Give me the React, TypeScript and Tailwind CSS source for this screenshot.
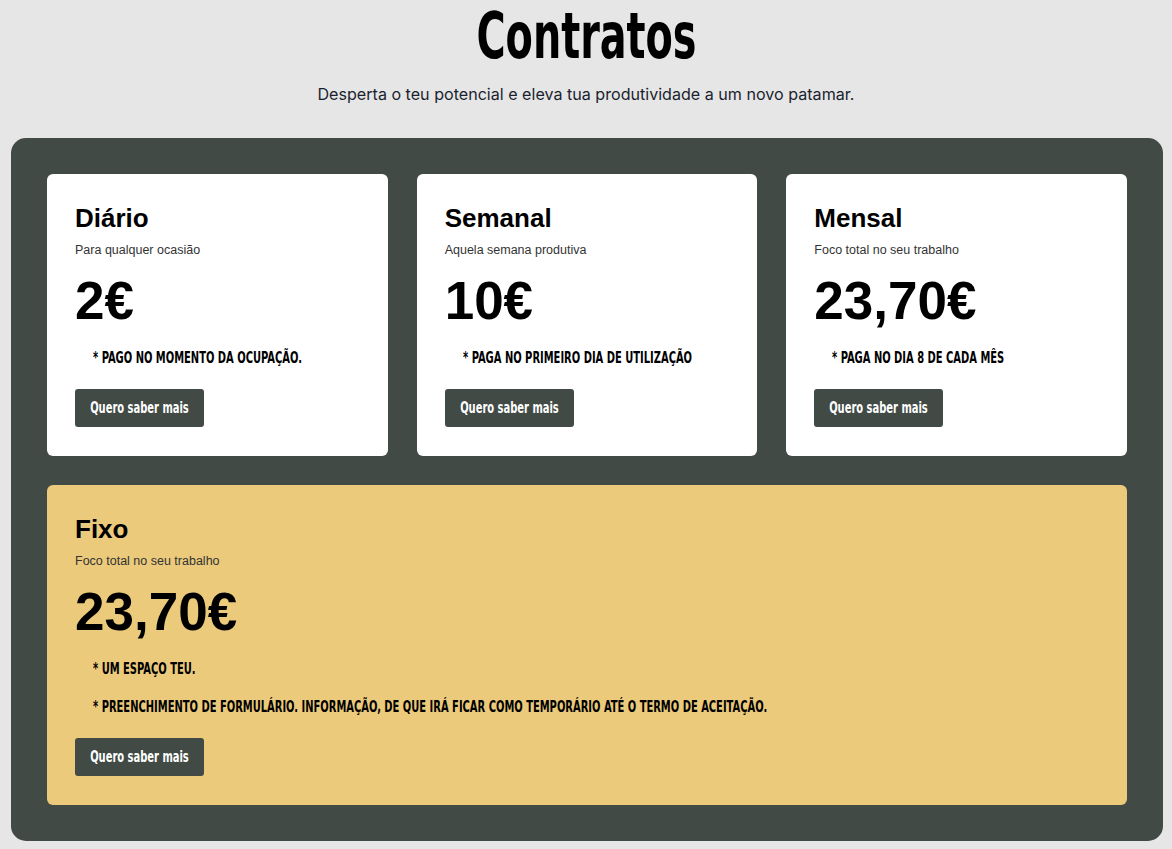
import React from "react";

type Plan = {
  name: string;
  tagline: string;
  price: string;
  notes: string[];
};

const plans: Plan[] = [
  {
    name: "Diário",
    tagline: "Para qualquer ocasião",
    price: "2€",
    notes: ["* PAGO NO MOMENTO DA OCUPAÇÃO."],
  },
  {
    name: "Semanal",
    tagline: "Aquela semana produtiva",
    price: "10€",
    notes: ["* PAGA NO PRIMEIRO DIA DE UTILIZAÇÃO"],
  },
  {
    name: "Mensal",
    tagline: "Foco total no seu trabalho",
    price: "23,70€",
    notes: ["* PAGA NO DIA 8 DE CADA MÊS"],
  },
];

const fixo: Plan = {
  name: "Fixo",
  tagline: "Foco total no seu trabalho",
  price: "23,70€",
  notes: [
    "* UM ESPAÇO TEU.",
    "* PREENCHIMENTO DE FORMULÁRIO. INFORMAÇÃO, DE QUE IRÁ FICAR COMO TEMPORÁRIO ATÉ O TERMO DE ACEITAÇÃO.",
  ],
};

// condensed display face, squeezed to match the narrow web font
const condensed = "font-['DejaVu_Sans_Condensed','DejaVu_Sans',sans-serif] font-bold";

const PlanCard: React.FC<{ plan: Plan; highlight?: boolean }> = ({ plan, highlight }) => {
  return (
    <div
      className={`flex flex-col rounded-[6px] p-[29px] pl-[28px] font-['Liberation_Sans',Arial,sans-serif] text-black ${
        highlight ? "col-span-3 bg-[#ecca7b]" : "bg-white"
      }`}
    >
      <h2 className="text-[26px] font-bold leading-[30px]">{plan.name}</h2>
      <p className="mt-[10px] text-[12.5px] leading-[14px] text-[#333]">{plan.tagline}</p>
      <p className="mt-[13px] text-[53px] font-bold leading-[62px]">{plan.price}</p>
      <ul className={`mt-[15px] flex flex-col gap-[16px] pl-[18px] ${condensed}`}>
        {plan.notes.map((n) => (
          <li key={n} className="h-[22px] text-[16px] leading-[22px]">
            <span className="inline-block origin-left scale-x-[0.69] whitespace-nowrap">{n}</span>
          </li>
        ))}
      </ul>
      <div className="mt-[20px]">
        <button
          className={`flex h-[38px] w-[129px] items-center justify-center rounded-[3px] bg-[#414a45] text-[16px] text-white ${condensed}`}
        >
          <span className="inline-block shrink-0 origin-center scale-x-[0.69] whitespace-nowrap">
            Quero saber mais
          </span>
        </button>
      </div>
    </div>
  );
};

export default function App() {
  return (
    <div className="min-h-screen bg-[#e6e6e6] pb-[7px]">
      <header className="pt-[4px] text-center">
        <h1 className={`text-[64px] leading-[64px] text-black ${condensed}`}>
          <span className="inline-block origin-center scale-x-[0.69]">Contratos</span>
        </h1>
        <p className="mt-[14px] font-['Inter',sans-serif] text-[16.1px] leading-[24px] text-[#1b1f2e]">
          Desperta o teu potencial e eleva tua produtividade a um novo patamar.
        </p>
      </header>

      <section className="ml-[11px] mt-[32px] w-[1152px] rounded-[15px] bg-[#414a45] p-[36px]">
        <div className="grid grid-cols-3 gap-[29px]">
          {plans.map((p) => (
            <PlanCard key={p.name} plan={p} />
          ))}
          <PlanCard plan={fixo} highlight />
        </div>
      </section>
    </div>
  );
}
